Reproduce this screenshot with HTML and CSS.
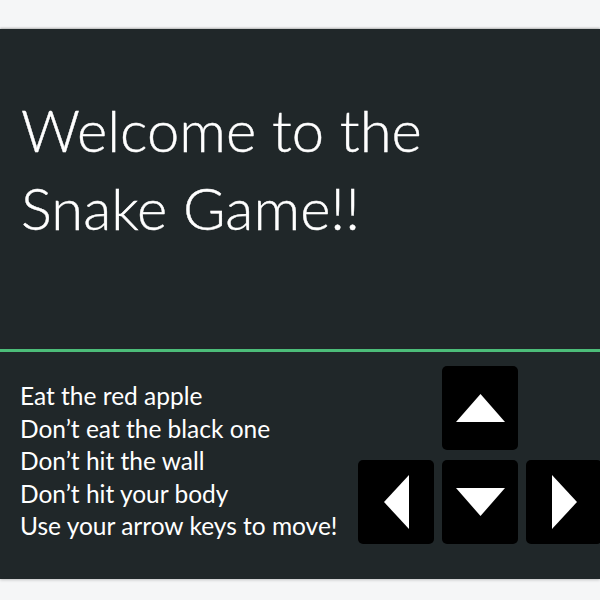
FILE: index.html
```html
<!DOCTYPE html>
<html>
<head>
<meta charset="utf-8">
<link rel="stylesheet" href="styles.css">
</head>
<body>
<div class="page">
  <main class="panel">
    <header class="hero">
      <h1 class="title">Welcome to the<br>Snake Game!!</h1>
    </header>
    <section class="info">
      <ul class="rules">
        <li>Eat the red apple</li>
        <li>Don’t eat the black one</li>
        <li>Don’t hit the wall</li>
        <li>Don’t hit your body</li>
        <li>Use your arrow keys to move!</li>
      </ul>
      <div class="keys">
        <div class="key key-up"><svg width="49" height="28" viewBox="0 0 49 28"><polygon points="24.5,0 49,28 0,28" fill="#fff"/></svg></div>
        <div class="key key-left"><svg width="25" height="54" viewBox="0 0 25 54"><polygon points="0,27 25,0 25,54" fill="#fff"/></svg></div>
        <div class="key key-down"><svg width="49" height="28" viewBox="0 0 49 28"><polygon points="0,0 49,0 24.5,28" fill="#fff"/></svg></div>
        <div class="key key-right"><svg width="25" height="54" viewBox="0 0 25 54"><polygon points="0,0 25,27 0,54" fill="#fff"/></svg></div>
      </div>
    </section>
  </main>
</div>
</body>
</html>
```

FILE: styles.css
```css
html, body {
  margin: 0;
  padding: 0;
  background: #f5f6f7;
  overflow: hidden;
}
.page {
  padding-top: 29px;
  width: 600px;
  height: 600px;
  box-sizing: border-box;
}
.panel {
  display: block;
  background: #202729;
  height: 550px;
  box-shadow: 0 -1px 2px rgba(0,0,0,0.25), 0 1px 3px rgba(0,0,0,0.2);
  overflow: hidden;
  font-family: Lato, "Open Sans", sans-serif;
  color: #ffffff;
}
.hero {
  height: 280px;
  padding: 0 0 40px 21px;
  border-bottom: 3px solid #4cbd79;
  display: flex;
  align-items: center;
}
.title {
  margin: 0;
  font-weight: 300;
  font-size: 58px;
  line-height: 78px;
  letter-spacing: 0;
  -webkit-text-stroke: 0.4px #fff;
}
.info {
  display: flex;
  justify-content: space-between;
  align-items: flex-start;
  padding: 14px 0 0 20px;
}
.rules {
  list-style: none;
  margin: 14px 0 0 0;
  padding: 0;
  font-size: 24.5px;
  line-height: 32.5px;
  font-weight: 400;
}
.keys {
  display: grid;
  grid-template-columns: 76px 76px 76px;
  grid-template-rows: 84px 84px;
  gap: 10px 8px;
  margin-right: -2px;
}
.key {
  background: #000;
  border-radius: 5px;
  display: flex;
  align-items: center;
  justify-content: center;
}
.key svg { display: block; }
.key-up { grid-column: 2; grid-row: 1; }
.key-left { grid-column: 1; grid-row: 2; }
.key-down { grid-column: 2; grid-row: 2; }
.key-right { grid-column: 3; grid-row: 2; }
```
